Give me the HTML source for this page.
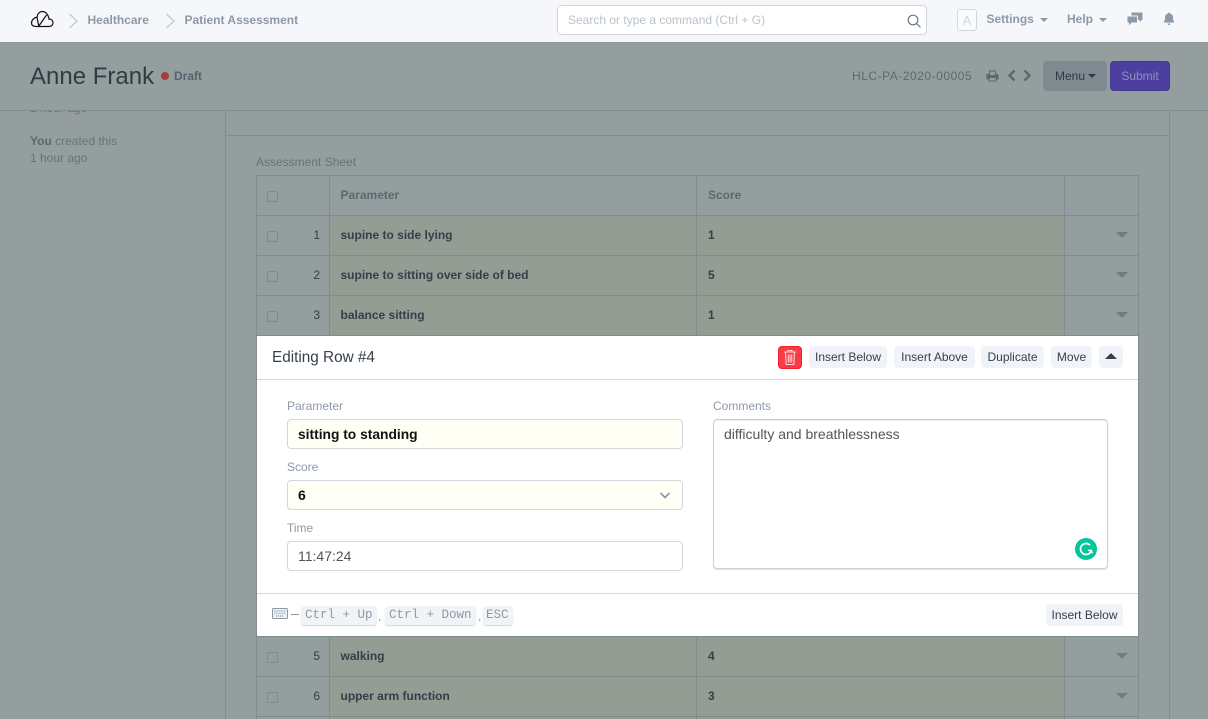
<!DOCTYPE html>
<html><head><meta charset="utf-8"><style>
html,body{margin:0;padding:0}
body{width:1208px;height:719px;overflow:hidden;position:relative;background:#959e9f;font-family:"Liberation Sans",sans-serif;font-size:12px;color:#36414c}
.a{position:absolute;white-space:nowrap}
.ln{position:absolute;background:#818c91}
.cell{position:absolute;background:#949c94}
.chk{position:absolute;left:267px;width:9px;height:9px;border:1px solid #7f8a8e;border-radius:2px}
.n{position:absolute;width:20px;left:300px;text-align:right;font-size:12px;color:#333e48}
.p{position:absolute;left:340.5px;font-weight:bold;font-size:12px;color:#333e49;white-space:nowrap}
.tri{position:absolute;left:1116px;width:0;height:0;border-left:6px solid transparent;border-right:6px solid transparent;border-top:6px solid #727c7f}
.b{position:absolute;background:#f0f3f8;border-radius:4px;height:22px;line-height:22px;text-align:center;font-size:12px;color:#36414c;white-space:nowrap}
.l{position:absolute;color:#8d99a6;font-size:12px;white-space:nowrap}
.i{position:absolute;box-sizing:border-box;left:30px;width:396px;height:30px;border:1px solid #d1d8dd;border-radius:4px;line-height:29px;padding-left:10px;font-size:14px}
kbd{font-family:"Liberation Mono",monospace;font-size:12.5px;color:#8d99a6;background:#f0f4f7;border-radius:3px;box-shadow:0 1px 1px #d1d8dd;padding:1px 4px;display:inline-block;height:17px;line-height:17px;position:absolute;top:0}
</style></head><body>

<!-- navbar -->
<div class="a" style="left:0;top:0;width:1208px;height:42px;background:#f5f7fb"></div>
<svg class="a" style="left:30px;top:10px" width="25" height="18" viewBox="0 0 25 18" fill="none" stroke="#111" stroke-width="1.2"><path d="M6.500 16.500H19C21.500 16.500 23 14.800 23 12.800C23 10.500 21 8.800 19 9.200C18.500 5 15.800 1.500 12.500 1.500C9.500 1.500 7.500 3.800 7 7C4 7.800 1.500 10 1.500 13C1.500 15.300 3.500 16.500 6.500 16.500Z"/><path d="M7 7C7.500 10 8 13 9 16.500M16.500 5L8.500 16.500"/></svg>
<svg class="a" style="left:68px;top:13px" width="11" height="16" viewBox="0 0 11 16" fill="none" stroke="#c0c9d4" stroke-width="1.300"><path d="M1.500 1L9 8L1.500 15"/></svg>
<div class="a" style="left:87.500px;top:13px;font-size:12px;font-weight:bold;color:#8d99a6;line-height:15px">Healthcare</div>
<svg class="a" style="left:165px;top:13px" width="11" height="16" viewBox="0 0 11 16" fill="none" stroke="#c0c9d4" stroke-width="1.300"><path d="M1.500 1L9 8L1.500 15"/></svg>
<div class="a" style="left:184.500px;top:13px;font-size:12px;font-weight:bold;color:#8d99a6;line-height:15px">Patient Assessment</div>

<div class="a" style="left:557px;top:5px;width:370px;height:30px;box-sizing:border-box;background:#fff;border:1px solid #d1d8dd;border-radius:4px;line-height:29px;padding-left:10px;color:#b8c2cc;font-size:12px">Search or type a command (Ctrl + G)</div>
<svg class="a" style="left:907px;top:14px" width="15" height="14" viewBox="0 0 15 14" fill="none" stroke="#6b7783" stroke-width="1.200"><circle cx="6" cy="6" r="4.800"/><path d="M9.500 9.500L13.500 13.500"/></svg>

<div class="a" style="left:957px;top:9px;width:20px;height:22px;box-sizing:border-box;border:1px solid #d1d8dd;border-radius:3px;background:#fafbfc;text-align:center;line-height:21px;color:#d1d8dd;font-size:13px">A</div>
<div class="a" style="left:986.500px;top:12px;font-weight:bold;color:#8d99a6;font-size:12px;line-height:15px">Settings</div>
<div class="a" style="left:1040px;top:18px;border-left:4px solid transparent;border-right:4px solid transparent;border-top:4px solid #8d99a6"></div>
<div class="a" style="left:1067px;top:12px;font-weight:bold;color:#8d99a6;font-size:12px;line-height:15px">Help</div>
<div class="a" style="left:1099px;top:18px;border-left:4px solid transparent;border-right:4px solid transparent;border-top:4px solid #8d99a6"></div>
<svg class="a" style="left:1127px;top:12px" width="16" height="14" viewBox="0 0 16 14" fill="#8d99a6"><path d="M4.500 0.500H15.500V8H14V10L12 8H11V3.500H4.500Z"/><path d="M0.500 4.500H10V10.500H4.500L2 13.500V10.500H0.500Z"/></svg>
<svg class="a" style="left:1163px;top:12px" width="12" height="14" viewBox="0 0 12 14" fill="#8d99a6"><path d="M6 0.500C6.700 0.500 7 1 7 1.500C9 2 10 3.500 10 5.500C10 8 10.500 9 11.500 10.500H0.500C1.500 9 2 8 2 5.500C2 3.500 3 2 5 1.500C5 1 5.300 0.500 6 0.500Z"/><path d="M4.500 11.500H7.500C7.500 12.500 6.800 13 6 13C5.200 13 4.500 12.500 4.500 11.500Z"/></svg>

<!-- page header -->
<div class="a" style="left:0;top:42px;width:1208px;height:1px;background:#8e9798"></div>
<div class="a" style="left:30px;top:61px;font-size:24px;line-height:32px;color:#303b44">Anne Frank</div>
<div class="a" style="left:161px;top:72px;width:8px;height:8px;border-radius:50%;background:#ab3b42"></div>
<div class="a" style="left:174px;top:69px;font-size:12px;font-weight:bold;line-height:15px;color:#56626b">Draft</div>
<div class="a" style="left:852px;top:69px;font-size:12px;line-height:15px;color:#5c6871;letter-spacing:.53px">HLC-PA-2020-00005</div>
<svg class="a" style="left:986px;top:70px" width="13" height="12" viewBox="0 0 13 12" fill="#5c6871"><path d="M3 0.500H10V4H12.500V9.500H10.500V11.500H2.500V9.500H0.500V4H3ZM4 1.500V5H9V1.500ZM3.500 8V10.500H9.500V8Z" fill-rule="evenodd"/></svg>
<svg class="a" style="left:1006px;top:69px" width="11" height="13" viewBox="0 0 11 13" fill="none" stroke="#5c6871" stroke-width="2.400"><path d="M8.500 1.500L3.500 6.500L8.500 11.500"/></svg>
<svg class="a" style="left:1022px;top:69px" width="11" height="13" viewBox="0 0 11 13" fill="none" stroke="#5c6871" stroke-width="2.400"><path d="M2.500 1.500L7.500 6.500L2.500 11.500"/></svg>
<div class="a" style="left:1043px;top:61px;width:64px;height:30px;background:#7f8a90;border-radius:4px"></div>
<div class="a" style="left:1055px;top:69px;font-size:12px;line-height:15px;color:#2f3a43">Menu</div>
<div class="a" style="left:1088px;top:74px;border-left:4px solid transparent;border-right:4px solid transparent;border-top:4px solid #2f3a43"></div>
<div class="a" style="left:1110px;top:61px;width:60px;height:30px;box-sizing:border-box;background:#4c3f9f;border:1px solid #43378f;border-radius:4px;text-align:center;line-height:29px;color:#918fbc;font-size:12px">Submit</div>

<div class="ln" style="left:0;top:110px;width:1208px;height:1px"></div>
<div class="ln" style="left:225px;top:110px;width:1px;height:609px"></div>
<div class="ln" style="left:1169px;top:110px;width:1px;height:609px"></div>
<div class="ln" style="left:225px;top:135px;width:945px;height:1px"></div>

<!-- sidebar -->
<div class="a" style="left:30px;top:111px;height:5px;width:190px;overflow:hidden"><span style="position:absolute;top:-10px;left:0;line-height:15px;color:#66727b">1 hour ago</span></div>
<div class="a" style="left:30px;top:134px;line-height:15px;color:#66727b"><b style="color:#5c6871">You</b> created this</div>
<div class="a" style="left:30px;top:151px;line-height:15px;color:#66727b">1 hour ago</div>

<!-- table -->
<div class="a" style="left:256px;top:155px;line-height:15px;color:#66727b">Assessment Sheet</div>

<div class="cell" style="left:330px;top:216px;width:734px;height:119px"></div>
<div class="cell" style="left:330px;top:637px;width:734px;height:82px"></div>

<div class="ln" style="left:256px;top:175px;width:883px;height:1px"></div>
<div class="ln" style="left:256px;top:215px;width:883px;height:1px"></div>
<div class="ln" style="left:256px;top:255px;width:883px;height:1px"></div>
<div class="ln" style="left:256px;top:295px;width:883px;height:1px"></div>
<div class="ln" style="left:256px;top:676px;width:883px;height:1px"></div>
<div class="ln" style="left:256px;top:716px;width:883px;height:1px"></div>
<div class="ln" style="left:256px;top:175px;width:1px;height:544px"></div>
<div class="ln" style="left:329px;top:175px;width:1px;height:544px"></div>
<div class="ln" style="left:696px;top:175px;width:1px;height:544px"></div>
<div class="ln" style="left:1064px;top:175px;width:1px;height:544px"></div>
<div class="ln" style="left:1138px;top:175px;width:1px;height:544px"></div>

<div class="chk" style="top:191px"></div>
<div class="a" style="left:340.500px;top:188px;font-weight:bold;line-height:15px;color:#5c6871">Parameter</div>
<div class="a" style="left:708px;top:188px;font-weight:bold;line-height:15px;color:#5c6871">Score</div>

<div class="chk" style="top:231px"></div><div class="n" style="top:228px">1</div><div class="p" style="top:228px">supine to side lying</div><div class="p" style="left:708px;top:228px">1</div><div class="tri" style="top:232px"></div>
<div class="chk" style="top:271px"></div><div class="n" style="top:268px">2</div><div class="p" style="top:268px">supine to sitting over side of bed</div><div class="p" style="left:708px;top:268px">5</div><div class="tri" style="top:272px"></div>
<div class="chk" style="top:311px"></div><div class="n" style="top:308px">3</div><div class="p" style="top:308px">balance sitting</div><div class="p" style="left:708px;top:308px">1</div><div class="tri" style="top:312px"></div>
<div class="chk" style="top:652px"></div><div class="n" style="top:649px">5</div><div class="p" style="top:649px">walking</div><div class="p" style="left:708px;top:649px">4</div><div class="tri" style="top:653px"></div>
<div class="chk" style="top:692px"></div><div class="n" style="top:689px">6</div><div class="p" style="top:689px">upper arm function</div><div class="p" style="left:708px;top:689px">3</div><div class="tri" style="top:693px"></div>

<!-- editing panel -->
<div class="a" style="left:257px;top:336px;width:881px;height:300px;background:#fff">
  <div class="a" style="left:15px;top:12px;font-size:15.3px;line-height:20px;color:#36414c">Editing Row #4</div>
  <div class="a" style="left:521px;top:10px;width:24px;height:23px;box-sizing:border-box;background:#fb3b46;border:1px solid #f0202c;border-radius:4px"></div>
  <svg class="a" style="left:526px;top:13px" width="14" height="17" viewBox="0 0 14 17" fill="none" stroke="#fbd5d7" stroke-width="1.100"><path d="M1 3H13M5 3V1.500H9V3M2.500 3L3.200 15.500H10.800L11.500 3M5.300 5.500V13.500M7 5.500V13.500M8.700 5.500V13.500"/></svg>
  <div class="b" style="left:552px;top:10px;width:78px">Insert Below</div>
  <div class="b" style="left:637px;top:10px;width:81px">Insert Above</div>
  <div class="b" style="left:724px;top:10px;width:63px">Duplicate</div>
  <div class="b" style="left:794px;top:10px;width:41px">Move</div>
  <div class="b" style="left:842px;top:10px;width:24px"></div>
  <div class="a" style="left:848px;top:17px;border-left:6px solid transparent;border-right:6px solid transparent;border-bottom:6px solid #36414c"></div>
  <div class="a" style="left:0;top:43px;width:881px;height:1px;background:#d1d8dd"></div>

  <div class="l" style="left:30px;top:63px;line-height:15px">Parameter</div>
  <div class="i" style="top:83px;background:#fffff5;font-weight:bold;color:#111;font-size:13.8px;line-height:30px">sitting to standing</div>
  <div class="l" style="left:30px;top:124px;line-height:15px">Score</div>
  <div class="i" style="top:144px;background:#fffff5;font-weight:bold;color:#111">6</div>
  <svg class="a" style="left:402px;top:155px" width="12" height="9" viewBox="0 0 12 9" fill="none" stroke="#8d99a6" stroke-width="1.700"><path d="M1.500 2L6 6.500L10.500 2"/></svg>
  <div class="l" style="left:30px;top:185px;line-height:15px">Time</div>
  <div class="i" style="top:205px;color:#555">11:47:24</div>

  <div class="l" style="left:456px;top:63px;line-height:15px">Comments</div>
  <div class="a" style="left:456px;top:83px;width:395px;height:150px;box-sizing:border-box;border:1px solid #c8d0d8;border-radius:4px;padding:5px 10px;font-size:14px;line-height:18px;color:#555;box-shadow:inset 0 1px 1px rgba(0,0,0,.08),0 1px 1px #dfe4e9">difficulty and breathlessness</div>
  <div class="a" style="left:818px;top:202px;width:22px;height:22px;border-radius:50%;background:#03c79a"></div>
  <svg class="a" style="left:818px;top:202px" width="22" height="22" viewBox="0 0 22 22" fill="none" stroke="#fff" stroke-width="1.700"><path d="M15 7.200C14 6.100 12.600 5.500 11 5.500C8 5.500 5.500 8 5.500 11C5.500 14 8 16.500 11 16.500C13.500 16.500 15.400 15 16.200 12.800"/><path d="M13 12.500L16.400 12.200L17.300 15.300" stroke-width="1.400"/></svg>

  <div class="a" style="left:0;top:257px;width:881px;height:1px;background:#d1d8dd"></div>
  <svg class="a" style="left:15px;top:272px" width="16" height="12" viewBox="0 0 16 12"><rect x=".5" y=".5" width="15" height="10" rx="1" fill="#eef1f5" stroke="#8d99a6"/><path d="M2.500 3H13.500M2.500 5.300H13.500M4 8H12" stroke="#8d99a6" stroke-width="1.200" stroke-dasharray="1 1"/></svg>
  <div class="a" style="left:34px;top:278px;width:8px;height:1px;background:#8d99a6"></div>
  <div class="a" style="left:0;top:270px;width:300px;height:20px">
    <kbd style="left:44px;width:72px;padding:1px 0 1px 4px;box-sizing:content-box">Ctrl + Up</kbd>
    <span class="a" style="left:121px;top:3px;color:#8d99a6">,</span>
    <kbd style="left:128px;width:87px;padding:1px 0 1px 4px">Ctrl + Down</kbd>
    <span class="a" style="left:221px;top:3px;color:#8d99a6">,</span>
    <kbd style="left:226px;width:27px;padding:1px 0 1px 3px">ESC</kbd>
  </div>
  <div class="b" style="left:789px;top:268px;width:77px">Insert Below</div>
</div>
<div class="ln" style="left:256px;top:335px;width:883px;height:1px"></div>
<div class="ln" style="left:256px;top:336px;width:1px;height:301px"></div>
<div class="ln" style="left:1138px;top:336px;width:1px;height:301px"></div>
<div class="ln" style="left:256px;top:636px;width:883px;height:1px"></div>
</body></html>
